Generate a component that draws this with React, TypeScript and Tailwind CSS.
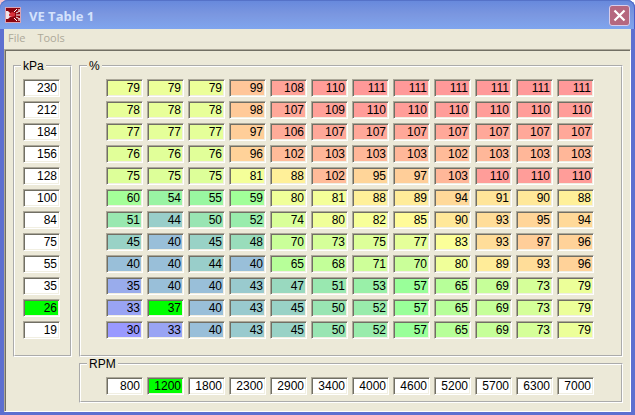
import clsx from "clsx";
import React from "react";

const kpaBins = [230, 212, 184, 156, 128, 100, 84, 75, 55, 35, 26, 19];
const rpmBins = [
	800, 1200, 1800, 2300, 2900, 3400, 4000, 4600, 5200, 5700, 6300, 7000,
];

const veTable = [
	[79, 79, 79, 99, 108, 110, 111, 111, 111, 111, 111, 111],
	[78, 78, 78, 98, 107, 109, 110, 110, 110, 110, 110, 110],
	[77, 77, 77, 97, 106, 107, 107, 107, 107, 107, 107, 107],
	[76, 76, 76, 96, 102, 103, 103, 103, 102, 103, 103, 103],
	[75, 75, 75, 81, 88, 102, 95, 97, 103, 110, 110, 110],
	[60, 54, 55, 59, 80, 81, 88, 89, 94, 91, 90, 88],
	[51, 44, 50, 52, 74, 80, 82, 85, 90, 93, 95, 94],
	[45, 40, 45, 48, 70, 73, 75, 77, 83, 93, 97, 96],
	[40, 40, 44, 40, 65, 68, 71, 70, 80, 89, 93, 96],
	[35, 40, 40, 43, 47, 51, 53, 57, 65, 69, 73, 79],
	[33, 37, 40, 43, 45, 50, 52, 57, 65, 69, 73, 79],
	[30, 33, 40, 43, 45, 50, 52, 57, 65, 69, 73, 79],
];

const activeRow = 10;
const activeCol = 1;

// blue -> green -> yellow -> red over the range of the table
const heatColor = (value: number) => {
	const t = ((value - 30) / 81) * 3;
	const ramp = (x: number) => Math.round(153 + 102 * x);
	if (t <= 1) return `rgb(153, ${ramp(t)}, ${ramp(1 - t)})`;
	if (t <= 2) return `rgb(${ramp(t - 1)}, 255, 153)`;
	return `rgb(255, ${ramp(3 - t)}, 153)`;
};

type CellProps = {
	value: number;
	label: string;
	active?: boolean;
	heat?: boolean;
};

const Cell = ({ value, label, active, heat }: CellProps) => (
	<input
		type="text"
		aria-label={label}
		defaultValue={value}
		className={clsx(
			"block h-[18px] w-[37px] border border-t-[#aca899] border-l-[#aca899] border-r-white border-b-white pr-[2px] text-right text-black shadow-[inset_1px_1px_0_#716f64,inset_-1px_-1px_0_#f1efe2] outline-none",
			active ? "bg-[#00ff00]" : "bg-white",
		)}
		style={heat && !active ? { backgroundColor: heatColor(value) } : undefined}
	/>
);

type GroupProps = {
	title: string;
	className?: string;
	children: React.ReactNode;
};

const Group = ({ title, className, children }: GroupProps) => (
	<fieldset
		className={clsx("min-w-0 border-2 border-white [border-style:groove]", className)}
	>
		<legend className="ml-[6px] h-3 px-[2px] leading-3">{title}</legend>
		{children}
	</fieldset>
);

const AppIcon = () => (
	<svg viewBox="0 0 16 16" className="h-4 w-4" aria-hidden="true">
		<rect width="16" height="16" fill="#d9a3b4" />
		<rect x="1" y="1" width="14" height="14" fill="#8c0510" />
		<path d="M1 4h2l2 2h2v4H5l-2 2H1z" fill="#f3e4e6" />
		<path d="M4 7l3-2 3 1v3l-3 1-3-1z" fill="#d8303a" />
		<path
			d="M9 5l3-3M11 6l4-2M11 8h4M11 10l4 2M9 11l3 3M13 3h2M13 13h2"
			stroke="#fff"
			strokeWidth="1"
			fill="none"
		/>
	</svg>
);

const App = () => {
	return (
		<div className="bg-linear-to-r from-[#f5c4cc] to-white">
			<div className="rounded-t-lg bg-[#5d6fd0] font-['Liberation_Sans',Arial,sans-serif] text-[12px] text-black">
				<header className="flex h-[29px] items-center gap-2 rounded-t-lg bg-linear-to-b from-[#6688dc] via-[#7b97e0] to-[#7fa5ee] px-[5px] shadow-[inset_0_1px_0_#5572c8,inset_-1px_0_0_#4a5cc8]">
					<AppIcon />
					<h1 className="flex-1 pt-[3px] font-['Open_Sans',sans-serif] text-[13px] leading-5 font-bold text-[#d4e2fc]">
						VE Table 1
					</h1>
					<button
						type="button"
						aria-label="Close"
						className="mt-[2px] flex h-[21px] w-[21px] items-center justify-center rounded-[3px] border border-[#d8cdea] bg-[#b5677f]"
					>
						<svg viewBox="0 0 13 13" className="h-[13px] w-[13px]">
							<path
								d="M1.5 1.5l10 10M11.5 1.5l-10 10"
								stroke="#fff"
								strokeWidth="2.2"
							/>
						</svg>
					</button>
				</header>
				<div className="mx-1 bg-[#ece9d8]">
					<nav className="flex h-5 gap-3 pb-[2px] pl-1 font-['Open_Sans',sans-serif] text-[11px] text-[#aca899]">
						<button type="button">File</button>
						<button type="button">Tools</button>
					</nav>
				</div>
				<div className="px-1 pb-[3px]">
					<main className="grid grid-cols-[59px_1fr] gap-x-[7px] gap-y-px border border-t-[#aca899] border-l-[#aca899] border-r-white border-b-white bg-[#ece9d8] pt-[10px] pr-[7px] pb-2 pl-2 shadow-[inset_1px_1px_0_#716f64]">
						<Group title="kPa">
							<div className="flex flex-col gap-1 pt-[7px] pb-4 pl-2">
								{kpaBins.map((kpa, i) => (
									<Cell
										key={i}
										value={kpa}
										label={`kPa ${i + 1}`}
										active={i === activeRow}
									/>
								))}
							</div>
						</Group>
						<Group title="%">
							<table className="mt-[3px] mb-3 ml-[21px] border-separate border-spacing-1">
								<tbody>
									{veTable.map((row, r) => (
										<tr key={r}>
											{row.map((ve, c) => (
												<td key={c} className="p-0">
													<Cell
														value={ve}
														label={`VE at ${kpaBins[r]} kPa, ${rpmBins[c]} RPM`}
														active={r === activeRow && c === activeCol}
														heat
													/>
												</td>
											))}
										</tr>
									))}
								</tbody>
							</table>
						</Group>
						<Group title="RPM" className="col-start-2">
							<div className="flex gap-1 pt-[7px] pb-[6px] pl-[25px]">
								{rpmBins.map((rpm, i) => (
									<Cell
										key={i}
										value={rpm}
										label={`RPM ${i + 1}`}
										active={i === activeCol}
									/>
								))}
							</div>
						</Group>
					</main>
				</div>
			</div>
		</div>
	);
};

export default App;
